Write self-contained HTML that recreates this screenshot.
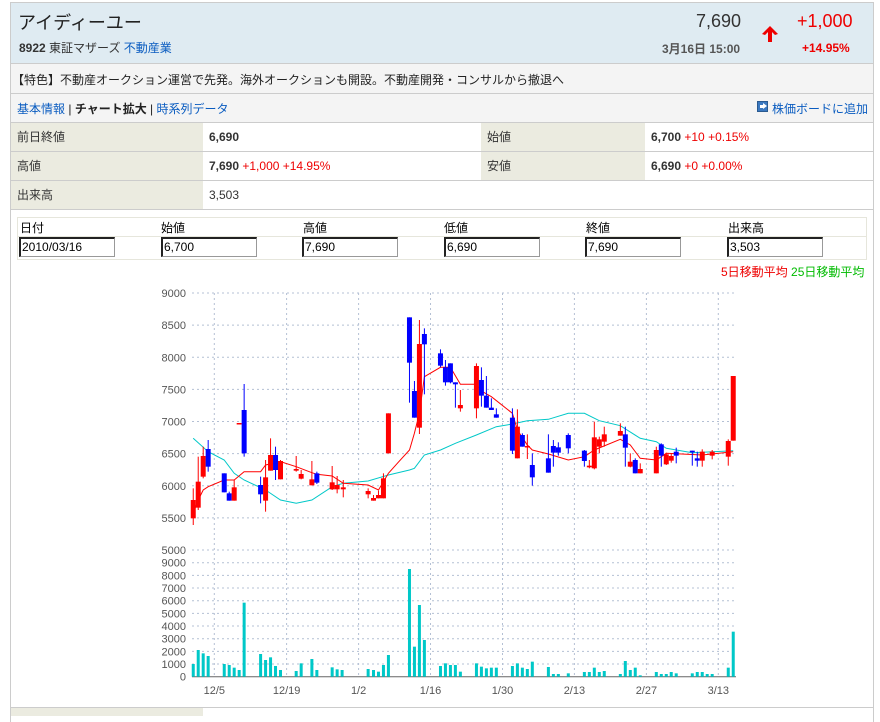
<!DOCTYPE html>
<html><head><meta charset="utf-8"><style>
*{margin:0;padding:0;box-sizing:border-box}
body{width:880px;height:714px;overflow:hidden;background:#fff;font-family:"Liberation Sans","Noto Sans CJK JP",sans-serif;font-size:12px;color:#333;position:relative}
.a{position:absolute}
.box{left:10px;top:2px;width:864px;height:720px;border-left:1px solid #ccc;border-right:1px solid #ccc;border-top:1px solid #ccc}
.hdr{left:11px;top:3px;width:862px;height:61px;background:#dfebf2;border-bottom:1px solid #ccc}
.row{left:11px;width:862px;background:#f4f4f4;border-bottom:1px solid #ccc}
.c{position:absolute;height:29px;line-height:28px;border-bottom:1px solid #ccc;padding-left:6px;font-size:12px}
.l{background:#ebebe0}
.r{color:#e00;font-weight:normal}
b{font-weight:bold}
a{color:#0a5cc0;text-decoration:none}
.inp{position:absolute;top:237px;width:96px;height:20px;border:1px solid #999;border-top:2px solid #222;border-left:2px solid #222;background:#fff;font-size:12px;line-height:16px;padding-left:1px;color:#000}
.th{position:absolute;top:219px;font-size:12px;color:#000}
</style></head><body>
<div class="a box"></div>
<div class="a hdr"></div>
<div class="a" style="left:18px;top:9px;font-size:18px;color:#222">アイディーユー</div>
<div class="a" style="left:19px;top:39px;font-size:12px;color:#333"><b>8922</b> 東証マザーズ <a>不動産業</a></div>
<div class="a" style="left:696px;top:11px;font-size:18px;color:#333">7,690</div>
<div class="a" style="left:662px;top:40px;font-size:12px;color:#555;font-weight:bold">3月16日 15:00</div>
<svg class="a" style="left:759px;top:24px" width="22" height="20" viewBox="0 0 22 20"><path d="M11 2 L3 10 L6 11 L9 8 L9 18 L13 18 L13 8 L16 11 L19 10 Z" fill="#e00"/></svg>
<div class="a" style="left:797px;top:11px;font-size:18px;color:#e00">+1,000</div>
<div class="a" style="left:802px;top:41px;font-size:12px;color:#e00;font-weight:bold">+14.95%</div>
<div class="a row" style="top:64px;height:30px"></div>
<div class="a" style="left:12px;top:71px;font-size:12px;color:#222">【特色】不動産オークション運営で先発。海外オークションも開設。不動産開発・コンサルから撤退へ</div>
<div class="a row" style="top:94px;height:29px"></div>
<div class="a" style="left:17px;top:100px;font-size:12px;color:#222"><a>基本情報</a> | <b>チャート拡大</b> | <a>時系列データ</a></div>
<div class="a" style="left:757px;top:101px;width:11px;height:11px;background:#3a78c0;border:1px solid #2a5a90"><div style="position:absolute;left:2px;top:3px;width:4px;height:3px;background:#fff"></div><div style="position:absolute;left:5px;top:1px;border-left:4px solid #fff;border-top:3.5px solid transparent;border-bottom:3.5px solid transparent"></div></div>
<div class="a" style="left:772px;top:100px;font-size:12px"><a>株価ボードに追加</a></div>
<div class="c l" style="left:11px;top:123px;width:192px">前日終値</div>
<div class="c" style="left:203px;top:123px;width:278px"><b>6,690</b></div>
<div class="c l" style="left:481px;top:123px;width:164px">始値</div>
<div class="c" style="left:645px;top:123px;width:228px"><b>6,700</b> <span class="r">+10 +0.15%</span></div>
<div class="c l" style="left:11px;top:152px;width:192px">高値</div>
<div class="c" style="left:203px;top:152px;width:278px"><b>7,690</b> <span class="r">+1,000 +14.95%</span></div>
<div class="c l" style="left:481px;top:152px;width:164px">安値</div>
<div class="c" style="left:645px;top:152px;width:228px"><b>6,690</b> <span class="r">+0 +0.00%</span></div>
<div class="c l" style="left:11px;top:181px;width:192px">出来高</div>
<div class="c" style="left:203px;top:181px;width:670px">3,503</div>
<div class="a" style="left:17px;top:217px;width:850px;height:43px;border:1px solid #e6e6dc"></div>
<div class="a" style="left:17px;top:236px;width:850px;height:1px;background:#e6e6dc"></div>
<div class="th" style="left:20px">日付</div><div class="th" style="left:161px">始値</div><div class="th" style="left:303px">高値</div><div class="th" style="left:444px">低値</div><div class="th" style="left:586px">終値</div><div class="th" style="left:728px">出来高</div>
<div class="inp" style="left:19px">2010/03/16</div>
<div class="inp" style="left:161px">6,700</div>
<div class="inp" style="left:302px">7,690</div>
<div class="inp" style="left:444px">6,690</div>
<div class="inp" style="left:585px">7,690</div>
<div class="inp" style="left:727px">3,503</div>
<div class="a" style="left:721px;top:263px;font-size:12px;color:#e00">5日移動平均 <span style="color:#0b0">25日移動平均</span></div>
<svg id="ch" class="a" style="left:0;top:0" width="880" height="714"></svg>
<div class="a" style="left:11px;top:707px;width:862px;height:1px;background:#ccc"></div>
<div class="a" style="left:11px;top:708px;width:192px;height:8px;background:#ebebe0"></div>
<script>
var s='',ns=document.getElementById('ch');
function X(z){return 150+z/2.613}function Y(z){return 280+z/3}
for(var i=0;i<=8;i++){var y=293+i*32.125;s+='<line x1="192" x2="736" y1="'+y+'" y2="'+y+'" stroke="#b4c0d4" stroke-dasharray="2,3"/>';s+='<text x="186" y="'+(y+4)+'" text-anchor="end" font-size="11" fill="#555" font-family="Liberation Sans">'+(9000-i*500)+'</text>';}
for(var i=0;i<=9;i++){var y=562.7+i*12.67;if(i<9)s+='<line x1="192" x2="736" y1="'+y+'" y2="'+y+'" stroke="#b4c0d4" stroke-dasharray="2,3"/>';s+='<text x="186" y="'+(y+4)+'" text-anchor="end" font-size="11" fill="#555" font-family="Liberation Sans">'+((9-i)*1000||0)+'</text>';}
var gx=[214.3,286.6,358.6,430.5,502.5,574.4,646.4,718.3],gl=['12/5','12/19','1/2','1/16','1/30','2/13','2/27','3/13'];
for(var i=0;i<8;i++){s+='<line x1="'+gx[i]+'" x2="'+gx[i]+'" y1="293" y2="676" stroke="#b4c0d4" stroke-dasharray="2,3"/>';s+='<text x="'+gx[i]+'" y="694" text-anchor="middle" font-size="11" fill="#555" font-family="Liberation Sans">'+gl[i]+'</text>';}
s+='<line x1="192" x2="736" y1="676.7" y2="676.7" stroke="#666"/>';
var c=[[113,660,715,625,735,1],[126,605,683,530,690,1],[139,528,590,500,595,1],[152,507,560,480,575,0],[194,580,637,580,637,0],[207,640,662,635,662,0],[220,622,662,600,662,1],[233,429,432,429,432,1],[246,390,520,312,530,0],[289,615,643,590,670,0],[302,592,662,540,695,1],[315,525,572,475,572,1],[328,525,570,500,600,0],[341,543,598,540,598,1],[382,567,572,528,575,1],[395,582,596,570,598,1],[423,598,616,543,616,1],[436,580,608,575,612,0],[476,607,628,558,630,1],[489,615,628,588,640,1],[505,622,628,600,652,1],[570,633,643,625,655,1],[584,654,662,645,662,1],[597,645,655,632,655,1],[610,595,655,580,655,1],[623,400,520,400,520,1],[678,112,248,112,368,0],[691,333,413,303,413,0],[704,192,443,120,462,1],[717,162,193,145,343,0],[759,220,257,208,262,0],[772,262,307,240,317,0],[785,250,307,250,310,0],[798,307,313,307,383,0],[811,375,385,330,395,1],[853,258,385,250,415,1],[866,300,347,262,380,0],[879,347,383,288,383,0],[892,383,390,355,390,0],[905,403,413,385,413,0],[947,413,512,385,522,0],[960,440,535,388,535,1],[973,465,500,460,500,0],[986,498,500,463,537,1],[999,555,592,520,617,0],[1041,535,578,463,578,0],[1054,498,518,480,560,0],[1067,502,518,487,527,0],[1093,465,505,460,520,0],[1135,512,543,510,560,0],[1148,557,562,540,565,1],[1161,472,565,425,568,1],[1174,478,500,470,520,1],[1187,463,485,440,500,1],[1229,453,467,430,467,1],[1242,463,503,440,560,0],[1255,545,560,520,562,1],[1268,540,580,535,580,0],[1281,567,580,550,580,1],[1323,510,580,500,580,1],[1336,493,527,490,560,0],[1349,523,553,518,555,1],[1362,528,542,520,548,1],[1375,515,527,503,550,0],[1417,512,517,512,557,0],[1430,535,542,515,560,0],[1443,515,542,508,560,1],[1469,515,527,510,538,1],[1511,483,530,478,557,1],[1524,288,482,288,482,1]];
var ma5=[113,700,126,660,139,630,152,620,194,600,220,600,246,575,289,575,302,555,341,545,382,560,423,578,436,583,476,588,505,610,570,615,597,630,610,605,623,580,650,545,678,510,691,460,704,400,717,290,759,262,785,262,811,313,853,313,866,333,892,350,947,400,960,450,986,495,999,510,1041,522,1093,540,1135,530,1161,510,1229,478,1255,495,1281,535,1323,540,1349,520,1443,525,1524,515];
var ma25=[113,475,152,515,194,540,220,580,246,600,302,630,341,660,382,670,423,660,476,620,505,610,570,603,623,585,678,570,691,565,717,525,759,510,798,490,853,465,905,440,947,432,986,422,1041,418,1093,400,1135,400,1174,422,1229,437,1281,475,1323,485,1349,505,1417,518,1524,512];
function pl(a,col){var p='';for(var i=0;i<a.length;i+=2)p+=X(a[i]).toFixed(1)+','+Y(a[i+1]).toFixed(1)+' ';return '<polyline points="'+p+'" fill="none" stroke="'+col+'" stroke-width="1"/>';}
s+=pl(ma25,'#00c8c8');s+=pl(ma5,'#f00');
c.forEach(function(k){var x=X(k[0]),col=k[5]?'#f00':'#00f';s+='<line x1="'+x+'" x2="'+x+'" y1="'+Y(k[3])+'" y2="'+Y(k[4])+'" stroke="'+col+'"/>';var h=Math.max(1.5,Y(k[2])-Y(k[1]));s+='<rect x="'+(x-2.5)+'" y="'+Y(k[1])+'" width="5" height="'+h+'" fill="'+col+'"/>';});
var v=[113,1152,126,1110,139,1120,152,1128,194,1152,207,1155,220,1163,233,1170,246,968,289,1122,302,1140,315,1132,328,1158,341,1170,382,1173,395,1150,423,1137,436,1170,476,1162,489,1168,502,1170,570,1167,584,1170,597,1175,610,1155,623,1125,678,867,691,1100,704,975,717,1080,759,1158,772,1150,785,1155,798,1155,811,1175,853,1150,866,1160,879,1165,892,1163,905,1163,947,1158,960,1150,973,1163,986,1167,999,1145,1041,1161,1054,1182,1067,1182,1093,1180,1135,1176,1148,1176,1161,1163,1174,1176,1187,1173,1229,1182,1242,1143,1255,1170,1268,1163,1281,1186,1323,1176,1336,1182,1349,1182,1362,1176,1375,1180,1417,1180,1430,1176,1443,1176,1456,1182,1469,1182,1511,1163,1524,1055];
for(var i=0;i<v.length;i+=2){var x=X(v[i]),y=Y(v[i+1]);s+='<rect x="'+(x-1.5)+'" y="'+y+'" width="3" height="'+(676.7-y)+'" fill="#00c8c8"/>';}
ns.innerHTML=s;
</script>
</body></html>
